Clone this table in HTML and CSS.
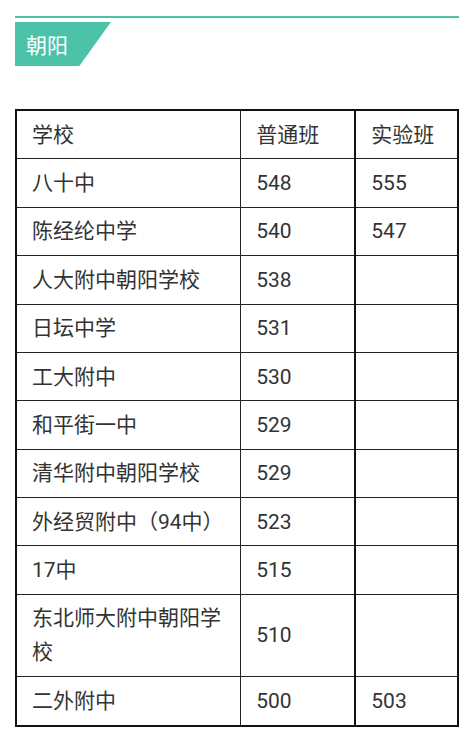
FILE: index.html
```html
<!DOCTYPE html>
<html lang="zh-CN">
<head>
<meta charset="utf-8">
<link rel="stylesheet" href="styles.css">
</head>
<body>
<div class="page">
  <div class="rule"></div>
  <div class="tag">朝阳</div>
  <table class="scores">
    <colgroup>
      <col class="c1"><col class="c2"><col class="c3">
    </colgroup>
    <tr><td>学校</td><td>普通班</td><td>实验班</td></tr>
    <tr><td>八十中</td><td>548</td><td>555</td></tr>
    <tr><td>陈经纶中学</td><td>540</td><td>547</td></tr>
    <tr><td>人大附中朝阳学校</td><td>538</td><td></td></tr>
    <tr><td>日坛中学</td><td>531</td><td></td></tr>
    <tr><td>工大附中</td><td>530</td><td></td></tr>
    <tr><td>和平街一中</td><td>529</td><td></td></tr>
    <tr><td>清华附中朝阳学校</td><td>529</td><td></td></tr>
    <tr><td>外经贸附中（94中）</td><td>523</td><td></td></tr>
    <tr><td>17中</td><td>515</td><td></td></tr>
    <tr><td>东北师大附中朝阳学校</td><td>510</td><td></td></tr>
    <tr><td>二外附中</td><td>500</td><td>503</td></tr>
  </table>
</div>
</body>
</html>
```

FILE: styles.css
```css
html, body {
  margin: 0;
  padding: 0;
  background: #ffffff;
}
.page {
  padding: 16px 13px 0 15px;
  font-family: Roboto, "Noto Sans CJK SC", sans-serif;
}
.rule {
  height: 2px;
  background: #4cc3a8;
}
.tag {
  margin-top: 4px;
  width: 96px;
  height: 44px;
  background: #4cc3a8;
  clip-path: polygon(0 0, 100% 0, 67% 100%, 0 100%);
  color: #ffffff;
  font-family: "Noto Sans CJK SC", sans-serif;
  font-size: 21px;
  line-height: 44px;
  padding-left: 11px;
  box-sizing: border-box;
}
.scores {
  margin-top: 43px;
  width: 444px;
  border-collapse: collapse;
  border: 2px solid #111;
  color: #333;
  font-size: 21px;
}
.c1 { width: 226px; }
.c2 { width: 115px; }
.c3 { width: 103px; }
.scores td {
  border: 1px solid #222;
  padding: 6.7px 15px;
  line-height: 34px;
  vertical-align: middle;
}
.scores td:nth-child(3) {
  border-left: 2px solid #111;
}
```
